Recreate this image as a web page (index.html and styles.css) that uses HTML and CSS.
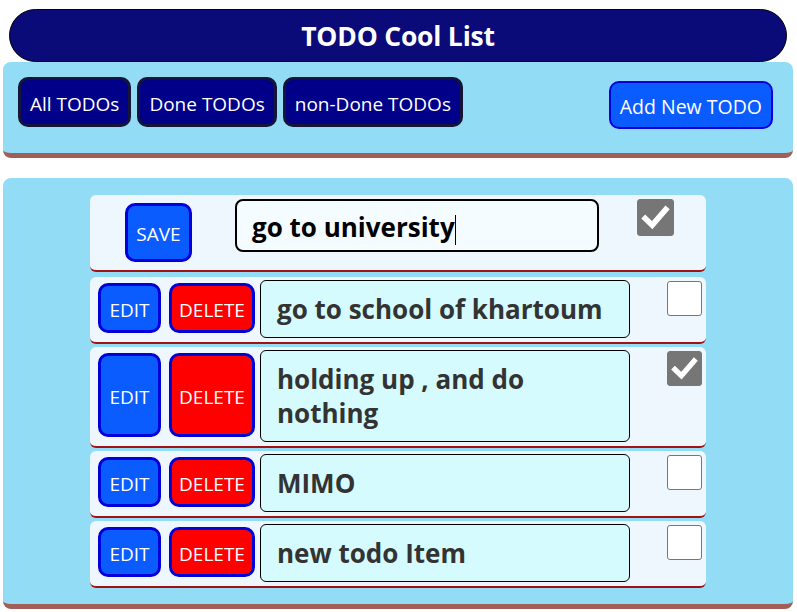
FILE: index.html
```html
<!DOCTYPE html>
<html>
<head>
<meta charset="utf-8">
<link rel="stylesheet" href="styles.css">
</head>
<body>
<header class="title-bar"><h1>TODO Cool List</h1></header>
<section class="panel filters">
  <div class="filter-group">
    <button class="filter-btn">All TODOs</button>
    <button class="filter-btn">Done TODOs</button>
    <button class="filter-btn">non-Done TODOs</button>
  </div>
  <button class="add-btn">Add New TODO</button>
</section>
<section class="panel list">
  <div class="item editing">
    <button class="btn blue save">SAVE</button>
    <div class="edit-input">go to university<span class="caret"></span></div>
    <span class="check checked big"><svg viewBox="0 0 20 20"><path d="M3.8 10.6 L8 14.6 L16.2 5.2" fill="none" stroke="#fff" stroke-width="3.4" stroke-linecap="square"/></svg></span>
  </div>
  <div class="item">
    <button class="btn blue edit">EDIT</button>
    <button class="btn red">DELETE</button>
    <div class="text">go to school of khartoum</div>
    <span class="check"></span>
  </div>
  <div class="item">
    <button class="btn blue edit">EDIT</button>
    <button class="btn red">DELETE</button>
    <div class="text">holding up , and do nothing</div>
    <span class="check checked"><svg viewBox="0 0 20 20"><path d="M3.8 10.6 L8 14.6 L16.2 5.2" fill="none" stroke="#fff" stroke-width="3.4" stroke-linecap="square"/></svg></span>
  </div>
  <div class="item">
    <button class="btn blue edit">EDIT</button>
    <button class="btn red">DELETE</button>
    <div class="text">MIMO</div>
    <span class="check"></span>
  </div>
  <div class="item">
    <button class="btn blue edit">EDIT</button>
    <button class="btn red">DELETE</button>
    <div class="text">new todo Item</div>
    <span class="check"></span>
  </div>
</section>
</body>
</html>
```
FILE: styles.css
```css
* { box-sizing: border-box; }
body {
  margin: 0;
  padding: 9px 4px 0 3px;
  font-family: "Open Sans", "Noto Sans", sans-serif;
  background: #fff;
}
button { font-family: inherit; cursor: pointer; }
.title-bar {
  margin: 0 6px 0 6px;
  height: 53px;
  background: #0a0a78;
  border: 1px solid #000;
  border-radius: 27px;
  display: flex;
  align-items: center;
  justify-content: center;
}
.title-bar h1 {
  margin: 0;
  color: #fff;
  font-size: 26.5px;
  font-weight: 700;
  letter-spacing: -0.2px;
}
.panel {
  background: #92dcf5;
  border-radius: 8px;
  border-bottom: 5px solid #a15f58;
}
.filters {
  height: 96px;
  padding: 15px 20px 0 15px;
  display: flex;
  align-items: flex-start;
  justify-content: space-between;
}
.filter-group { display: flex; gap: 6px; }
.filter-btn {
  height: 50px;
  padding: 3px 9px 0;
  background: #000088;
  color: #fff;
  font-size: 19px;
  border: 3px solid #15153a;
  border-radius: 10px;
}
.add-btn {
  margin-top: 4px;
  height: 48px;
  padding: 2px 9px 0;
  background: #0a5cff;
  color: #fff;
  font-size: 19.5px;
  border: 2px solid #0000dd;
  border-radius: 10px;
}
.list {
  margin-top: 20px;
  padding: 17px 0 16px;
  display: flex;
  flex-direction: column;
  align-items: center;
  gap: 3px;
}
.item {
  width: 616px;
  background: #eef6fe;
  border-radius: 6px;
  border-bottom: 2px solid #a31212;
  display: flex;
  align-items: stretch;
  padding: 3px 4px 4px 8px;
}
.btn {
  color: #fff;
  font-size: 19px;
  border: 3px solid #0000d8;
  border-radius: 10px;
  padding: 3px 0 0;
  margin: 3px 0 5px;
}
.blue { background: #0a5cff; }
.red { background: #ff0000; width: 86px; margin-left: 8px; }
.edit { width: 63px; }
.text {
  width: 370px;
  margin-left: 5px;
  background: #d5fbff;
  border: 1px solid #000;
  border-radius: 6px;
  padding: 11px 16px 11px 16px;
  font-size: 26px;
  font-weight: 700;
  line-height: 34px;
  color: #333;
}
.check {
  margin-left: auto;
  margin-top: 1px;
  width: 35px;
  height: 35px;
  border: 1px solid #767676;
  border-radius: 3px;
  background: #fff;
  flex: none;
  display: flex;
  align-items: center;
  justify-content: center;
}
.check.checked { background: #767676; border-color: #767676; }
.check svg { width: 31px; height: 31px; }
.item.editing {
  height: 77px;
  padding: 4px 32px 0 35px;
  align-items: flex-start;
  margin-bottom: 2px;
}
.save {
  width: 67px;
  height: 59px;
  margin: 4px 0 0;
}
.edit-input {
  margin-left: 43px;
  width: 364px;
  height: 53px;
  background: #f5fcff;
  border: 2px solid #000;
  border-radius: 8px;
  padding: 3px 15px 0;
  font-size: 26px;
  font-weight: 700;
  line-height: 46px;
  color: #000;
}
.caret {
  display: inline-block;
  width: 1px;
  height: 30px;
  background: #000;
  vertical-align: middle;
}
.check.big { width: 37px; height: 37px; margin-top: 0; margin-left: auto; }
.check.big svg { width: 33px; height: 33px; }
```
